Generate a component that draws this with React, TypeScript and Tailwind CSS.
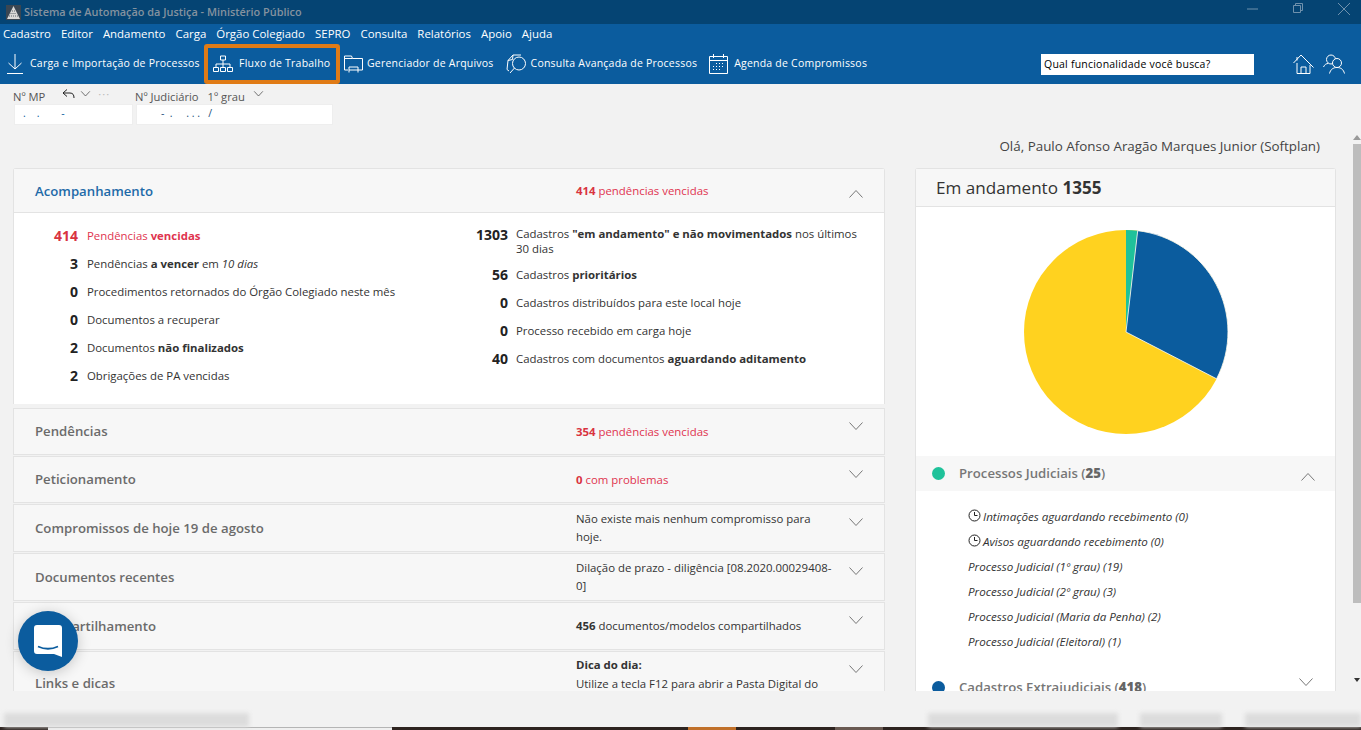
import { ReactNode } from 'react';

const menuItems = ['Cadastro', 'Editor', 'Andamento', 'Carga', 'Órgão Colegiado', 'SEPRO', 'Consulta', 'Relatórios', 'Apoio', 'Ajuda'];

const leftStats: { n: string; label: ReactNode; red?: boolean }[] = [
    { n: '414', label: <>Pendências <b>vencidas</b></>, red: true },
    { n: '3', label: <>Pendências <b>a vencer</b> em <i>10 dias</i></> },
    { n: '0', label: <>Procedimentos retornados do Órgão Colegiado neste mês</> },
    { n: '0', label: <>Documentos a recuperar</> },
    { n: '2', label: <>Documentos <b>não finalizados</b></> },
    { n: '2', label: <>Obrigações de PA vencidas</> },
];

const rightStats: { n: string; label: ReactNode; tight?: boolean }[] = [
    { n: '1303', label: <>Cadastros <b>"em andamento" e não movimentados</b> nos últimos 30 dias</>, tight: true },
    { n: '56', label: <>Cadastros <b>prioritários</b></> },
    { n: '0', label: <>Cadastros distribuídos para este local hoje</> },
    { n: '0', label: <>Processo recebido em carga hoje</> },
    { n: '40', label: <>Cadastros com documentos <b>aguardando aditamento</b></> },
];

const judicialItems = [
    'Processo Judicial (1º grau) (19)',
    'Processo Judicial (2º grau) (3)',
    'Processo Judicial (Maria da Penha) (2)',
    'Processo Judicial (Eleitoral) (1)',
];

function Chevron({ up, className }: { up?: boolean; className?: string }) {
    return (
        <svg width="16" height="9" viewBox="0 0 16 9" fill="none" stroke="#777" strokeWidth="1" className={className}>
            <path d={up ? 'M1.5 8.5 8 1.5l6.5 7' : 'M1.5.5 8 7.5l6.5-7'} />
        </svg>
    );
}

function Clock() {
    return (
        <svg width="13" height="13" viewBox="0 0 13 13" fill="none" stroke="#222" strokeWidth="1" className="mr-[2px] -mt-[3px] shrink-0">
            <circle cx="6.5" cy="6.5" r="5.5" />
            <path d="M6.5 3v3.5h3" />
        </svg>
    );
}

function StatRow({ n, label, red, tight, numWidth, gap }: { n: string; label: ReactNode; red?: boolean; tight?: boolean; numWidth: string; gap: string }) {
    return (
        <div className={`flex items-start ${red ? 'text-[#e0344f]' : 'text-[#333]'}`}>
            <span className={`${numWidth} shrink-0 text-right text-[14px] leading-[18px] font-bold ${red ? 'text-[#d9333f]' : 'text-[#222]'}`}>{n}</span>
            <span className={`${gap} text-[11.4px] ${tight ? 'leading-[15px]' : 'leading-[18px]'} [&_b]:font-bold`}>{label}</span>
        </div>
    );
}

function AccordionRow({ title, summary, height }: { title: string; summary: ReactNode; height: string }) {
    return (
        <div className={`${height} shrink-0 mt-px flex border border-[#e3e3e3] bg-[#f7f7f7]`}>
            <div className="w-[562px] shrink-0 pl-[21px] pt-[1px] self-center text-[13.2px] font-semibold text-[#6b6b6b]">{title}</div>
            <div className="w-[270px] shrink-0 self-center pr-[10px] text-[11.4px] leading-[18px] text-[#333]">{summary}</div>
            <Chevron className="ml-[2px] mt-[13px]" />
        </div>
    );
}

export default function App() {
    return (
        <div className="relative flex flex-col w-[1361px] h-[730px] overflow-hidden bg-[#f2f2f2] font-['Open_Sans','Liberation_Sans',sans-serif]">
            {/* title bar */}
            <div className="flex items-center h-6 shrink-0 bg-[#054473] pl-[6px]">
                <svg width="15" height="15" viewBox="0 0 15 15" className="shrink-0">
                    <rect width="15" height="15" fill="#3a4652" />
                    <path d="M7.5 1 14 14H1z" fill="#d8d8d8" />
                    <path d="M3 11h9M4.5 8.5h6M6 6h3" stroke="#3a4652" strokeWidth=".8" strokeDasharray="1 1" />
                </svg>
                <span className="ml-[3px] text-[10.9px] font-semibold text-[#84929f]">Sistema de Automação da Justiça - Ministério Público</span>
                <div className="ml-auto flex items-center">
                    <svg width="11" height="2" viewBox="0 0 11 2" className="mr-[35px] -mt-[6px]"><path d="M0 1h11" stroke="#6f91ad" /></svg>
                    <svg width="10" height="10" viewBox="0 0 10 10" fill="none" stroke="#6f91ad" className="mr-[35px] -mt-[8px]"><path d="M.5 2.500h7v7h-7zM2.500 2.500v-2h7v7h-2" /></svg>
                    <svg width="12" height="12" viewBox="0 0 12 12" fill="none" stroke="#6f91ad" className="mr-[11px] -mt-[6px]"><path d="M0 0l12 12M12 0 0 12" /></svg>
                </div>
            </div>

            {/* menu + toolbar */}
            <div className="shrink-0 h-[60px] bg-[#0b5c9e] text-white">
                <div className="flex gap-[10px] pl-[3px] h-[20px] items-center text-[11.45px] text-white">
                    {menuItems.map((m) => <span key={m}>{m}</span>)}
                </div>
                <div className="flex items-center h-[40px] pr-[16px] text-[10.5px] tracking-[.22px]">
                    <svg width="18" height="22" viewBox="0 0 18 22" fill="none" stroke="#fff" className="ml-[6px] shrink-0">
                        <path d="M9 1v15M2.5 10 9 16l6.500-6M1 20.500h16" />
                    </svg>
                    <span className="ml-[6px] w-[174px] shrink-0 whitespace-nowrap">Carga e Importação de Processos</span>
                    <div className="flex items-center w-[136px] h-[40px] shrink-0 border-[4px] border-[#e07b16] rounded-[3px] pl-[5px]">
                        <svg width="20" height="18" viewBox="0 0 20 18" fill="none" stroke="#fff" className="shrink-0">
                            <path d="M7.500 1h5v4h-5zM.5 12.500h5v4h-5zM7.500 12.500h5v4h-5zM14.500 12.500h5v4h-5zM10 5v7.500M3 12.500V9h14v3.500" />
                        </svg>
                        <span className="ml-[6px] whitespace-nowrap">Fluxo de Trabalho</span>
                    </div>
                    <svg width="19" height="18" viewBox="0 0 19 18" fill="none" stroke="#fff" className="ml-[4px] shrink-0">
                        <path d="M4 15H.5V1h7l1 2.500h10V15H14M.5 3.500h8M5 17.500V12h9v5.500M5 15h9" />
                    </svg>
                    <span className="ml-[4px] whitespace-nowrap">Gerenciador de Arquivos</span>
                    <svg width="21" height="20" viewBox="0 0 21 20" fill="none" stroke="#fff" className="ml-[12px] shrink-0">
                        <path d="M7 1h8M7 1 2 6.500l-1 9 2 1.500M7 1l-.5 4.500L2 6.500" />
                        <circle cx="13" cy="9.500" r="6.500" />
                        <path d="M8.500 14 4 19" />
                    </svg>
                    <span className="ml-[4px] whitespace-nowrap">Consulta Avançada de Processos</span>
                    <svg width="19" height="20" viewBox="0 0 19 20" fill="none" stroke="#fff" className="ml-[12px] shrink-0">
                        <path d="M.5 2.500h18v17H.5zM.5 6.500h18M4.500 0v4M14.500 0v4" />
                        <path d="M7 9.500h1M10 9.500h1M13 9.500h1M4 12.500h1M7 12.500h1M10 12.500h1M13 12.500h1M4 15.500h1M7 15.500h1M10 15.500h1" />
                    </svg>
                    <span className="ml-[6px] whitespace-nowrap">Agenda de Compromissos</span>
                    <div className="ml-auto w-[213px] h-[21px] shrink-0 bg-white pl-[3px] text-[10.5px] leading-[21px] text-black">Qual funcionalidade você busca?</div>
                    <svg width="21" height="20" viewBox="0 0 21 20" fill="none" stroke="#fff" className="ml-[39px] shrink-0">
                        <path d="M.5 9 8 1l12.500 12.500M4 6.500V3M4 9v10.500h13V11M8 19.500V13h5v6.500" />
                    </svg>
                    <svg width="22" height="20" viewBox="0 0 22 20" fill="none" stroke="#fff" className="ml-[9px] shrink-0">
                        <circle cx="8" cy="5.500" r="4.500" />
                        <path d="M.5 13c1-2.500 3-3.500 4.500-3.500" />
                        <circle cx="14" cy="9" r="4.500" fill="#0b5c9e" />
                        <path d="M6.500 19.500c1-4 3.500-6 7.500-6s6.500 2 7.500 6" />
                    </svg>
                </div>
            </div>

            {/* process number fields */}
            <div className="shrink-0 flex pl-[14px] pt-[6px] h-[43px] text-[11.2px] text-[#555]">
                <div className="w-[122px]">
                    <div className="flex items-center h-[14px]">
                        <span className="-ml-px">Nº MP</span>
                        <svg width="13" height="10" viewBox="0 0 13 10" fill="none" stroke="#222" className="ml-[17px] -mt-[6px]"><path d="M5 .5 1 4l4 3.500M1 4h7c3 0 4 2 4 5" /></svg>
                        <Chevron className="ml-[5px] -mt-[6px] w-[11px] h-[6px] [&_path]:stroke-[#333]" />
                        <span className="ml-[7px] -mt-[6px] leading-none tracking-[1px] text-[#bbb]">···</span>
                    </div>
                    <div className="w-[119px] h-[21px] border border-[#eeeeee] bg-white pl-[8px] text-[10.5px] text-[#0b5c9e] leading-[16px] whitespace-pre">.    .        -</div>
                </div>
                <div>
                    <div className="flex items-center h-[14px] -ml-px">
                        <span>Nº Judiciário</span>
                        <span className="ml-[9px]">1º grau</span>
                        <Chevron className="ml-[8px] -mt-[6px] w-[11px] h-[6px] [&_path]:stroke-[#333]" />
                    </div>
                    <div className="w-[197px] h-[21px] border border-[#eeeeee] bg-white pl-[24px] text-[10.5px] text-[#1d4f7c] leading-[16px] whitespace-pre">-  .     . . .   /</div>
                </div>
            </div>

            {/* greeting */}
            <div className="shrink-0 h-[41px] pr-[41px] pt-[9px] text-right text-[13.4px] leading-[20px] text-[#444]">
                Olá, Paulo Afonso Aragão Marques Junior (Softplan)
            </div>

            {/* dashboard */}
            <div className="flex h-[523px] shrink-0 overflow-hidden pl-[13px]">
                <div className="flex flex-col w-[872px] shrink-0">
                    <div className="shrink-0 h-[236px] border-x border-t border-[#e3e3e3] rounded-t-[3px] bg-white">
                        <div className="flex h-[44px] border-b border-[#e3e3e3] bg-[#f7f7f7]">
                            <div className="w-[562px] shrink-0 pl-[21px] pt-[2px] self-center text-[13.2px] font-semibold text-[#1d6aa8]">Acompanhamento</div>
                            <div className="w-[270px] shrink-0 self-center text-[11.4px] text-[#e0344f]"><b className="text-[#d9333f]">414</b> pendências vencidas</div>
                            <Chevron up className="ml-[2px] mt-[20px]" />
                        </div>
                        <div className="flex">
                            <div className="w-[430px] shrink-0 flex flex-col gap-[10px] pl-[12px] pt-[14px]">
                                {leftStats.map((s, i) => <StatRow key={i} {...s} numWidth="w-[52px]" gap="ml-[9px]" />)}
                            </div>
                            <div className="flex-1 flex flex-col gap-[10px] pt-[13px] pr-[22px]">
                                {rightStats.map((s, i) => <StatRow key={i} {...s} numWidth="w-[64px]" gap="ml-2" />)}
                            </div>
                        </div>
                    </div>
                    <div className="h-[3px] shrink-0" />
                    <AccordionRow title="Pendências" height="h-[47px]" summary={<span className="text-[#e0344f]"><b className="text-[#d9333f]">354</b> pendências vencidas</span>} />
                    <AccordionRow title="Peticionamento" height="h-[47px]" summary={<span className="text-[#e0344f]"><b className="text-[#d9333f]">0</b> com problemas</span>} />
                    <AccordionRow title="Compromissos de hoje 19 de agosto" height="h-[48px]" summary="Não existe mais nenhum compromisso para hoje." />
                    <AccordionRow title="Documentos recentes" height="h-[48px]" summary="Dilação de prazo - diligência [08.2020.00029408-0]" />
                    <AccordionRow title="Compartilhamento" height="h-[48px]" summary={<><b>456</b> documentos/modelos compartilhados</>} />
                    <div className="h-[60px] shrink-0 mt-px flex border border-[#e3e3e3] bg-[#f7f7f7]">
                        <div className="w-[562px] shrink-0 pl-[21px] pt-[22px] text-[13.2px] font-semibold text-[#6b6b6b]">Links e dicas</div>
                        <div className="w-[270px] shrink-0 pt-[3px] text-[11.4px] leading-[19px] text-[#333]">
                            <b>Dica do dia:</b><br />Utilize a tecla F12 para abrir a Pasta Digital do
                        </div>
                        <Chevron className="ml-[2px] mt-[13px]" />
                    </div>
                </div>

                <div className="ml-[30px] w-[421px] shrink-0 border-x border-t border-[#e3e3e3] rounded-t-[3px] bg-white">
                    <div className="h-[38px] border-b border-[#e3e3e3] bg-[#f7f7f7] pl-[20px] text-[17.1px] leading-[37px] text-[#333]">Em andamento <b>1355</b></div>
                    <div className="flex justify-center h-[249px] pt-[23px]">
                        <svg width="204" height="204" viewBox="-102 -102 204 204">
                            <circle r="102" fill="#ffd21f" />
                            <path d="M0 0 0-102A102 102 0 0 1 11.700-101.300Z" fill="#1fc29a" />
                            <path d="M0 0 11.700-101.300A102 102 0 0 1 90.600 46.800Z" fill="#0b5c9e" stroke="#fff" strokeWidth=".8" />
                        </svg>
                    </div>
                    <div className="flex items-center h-[35px] bg-[#f7f7f7] pl-[16px]">
                        <span className="w-[13px] h-[13px] rounded-full bg-[#1fc29a]" />
                        <span className="ml-[14px] pt-[1px] text-[13.2px] font-semibold text-[#777]">Processos Judiciais (<b className="text-[#666]">25</b>)</span>
                        <Chevron up className="ml-auto mr-[19px] mt-[6px]" />
                    </div>
                    <div className="flex flex-col pl-[52px] pt-[13px] text-[11.6px] italic leading-[25px] text-[#333]">
                        <div className="flex items-center"><Clock />Intimações aguardando recebimento (0)</div>
                        <div className="flex items-center"><Clock />Avisos aguardando recebimento (0)</div>
                        {judicialItems.map((j) => <div key={j}>{j}</div>)}
                    </div>
                    <div className="flex items-start pl-[16px] pt-[25px]">
                        <span className="mt-[2px] w-[13px] h-[13px] rounded-full bg-[#0b5c9e]" />
                        <span className="ml-[14px] -mt-px text-[13.2px] font-semibold text-[#777]">Cadastros Extrajudiciais (<b className="text-[#666]">418</b>)</span>
                        <Chevron className="ml-auto mr-[21px] -mt-[1px]" />
                    </div>
                </div>
            </div>

            {/* blurred status bar */}
            <div className="relative shrink-0 h-[36px]">
                <div className="absolute left-[4px] top-[22px] w-[245px] h-[14px] bg-[#dcdcdc] blur-[2px]" />
                <div className="absolute left-[928px] top-[22px] w-[190px] h-[14px] bg-[#dcdcdc] blur-[2px]" />
                <div className="absolute left-[1140px] top-[22px] w-[82px] h-[14px] bg-[#dcdcdc] blur-[2px]" />
                <div className="absolute left-[1245px] top-[22px] w-[116px] h-[14px] bg-[#dcdcdc] blur-[2px]" />
            </div>

            {/* desktop taskbar edge */}
            <div className="flex h-[3px] shrink-0 bg-[#2e2420]">
                <div className="w-[48px]" />
                <div className="w-[344px] border-t border-[#b5b5b5] bg-[#f0f0f0]" />
                <div className="w-[296px]" />
                <div className="w-[48px] bg-[#c0702a]" />
                <div className="w-[99px]" />
                <div className="w-[48px] bg-[#6a5a52]" />
            </div>

            {/* page scrollbar */}
            <div className="absolute left-[1353px] top-[130px] w-[8px] h-[561px] flex flex-col items-center">
                <svg width="8" height="14" viewBox="0 0 8 14" className="shrink-0"><path d="M0 10h8L4 5z" fill="#9a9a9a" /></svg>
                <div className="w-[8px] h-[459px] bg-[#bdbdbd]" />
                <svg width="8" height="6" viewBox="0 0 8 6" className="mt-auto mb-[8px]"><path d="M1 1h6L4 5z" fill="#333" /></svg>
            </div>

            {/* chat button */}
            <div className="absolute left-[18px] top-[611px] flex items-center justify-center w-[60px] h-[60px] rounded-full bg-[#0b5c9e] shadow-[0_2px_14px_rgba(0,0,0,.2)]">
                <svg width="28" height="32" viewBox="0 0 28 32">
                    <path d="M3 0h22a3 3 0 0 1 3 3v29l-8-3H3a3 3 0 0 1-3-3V3a3 3 0 0 1 3-3z" fill="#fff" />
                    <path d="M4 21.500Q14 26 24 21.500" fill="none" stroke="#0b5c9e" strokeWidth="1.800" />
                </svg>
            </div>
        </div>
    );
}
